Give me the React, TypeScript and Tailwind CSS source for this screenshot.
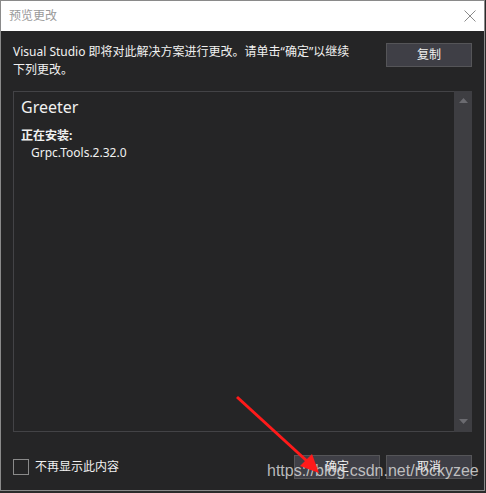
import React from "react";

export default function App() {
  const font = { fontFamily: '"Noto Sans", "Noto Sans CJK SC", sans-serif' };
  return (
    <div className="relative w-[486px] h-[493px] bg-[#2b2b2b] overflow-hidden" style={font}>
      <div className="w-[485px] h-[491px] flex flex-col border border-[#8a8a8a] bg-[#252526]">
        {/* title bar */}
        <div className="h-[30px] bg-white flex items-center justify-between pl-[8px] pr-[8px] shrink-0">
          <span className="text-[12px] text-[#9a9a9a] leading-none">预览更改</span>
          <svg width="12" height="12" viewBox="0 0 12 12">
            <path d="M0.5 0.5 L11.5 11.5 M11.5 0.5 L0.5 11.5" stroke="#8a8a8a" strokeWidth="1" />
          </svg>
        </div>
        {/* body */}
        <div className="flex-1 flex flex-col px-[12px] pt-[12px] pb-[11px]">
          <div className="flex items-start justify-between">
            <p className="text-[12px] leading-[18px] text-[#f1f1f1] w-[344px]">
              Visual Studio 即将对此解决方案进行更改。请单击“确定”以继续下列更改。
            </p>
            <button className="w-[86px] h-[24px] bg-[#3f3f46] border border-[#555558] text-[12px] text-[#f1f1f1] flex items-center justify-center">
              复制
            </button>
          </div>
          <div className="mt-[12px] h-[341px] flex">
            <div className="flex-1 border-l border-t border-b border-[#434346] pl-[7px] pt-[5px]">
              <div className="text-[16px] leading-[20px] text-[#f1f1f1]">Greeter</div>
              <div className="mt-[10px] text-[12px] leading-[17px] font-bold text-[#f1f1f1]">正在安装:</div>
              <div className="pl-[10px] text-[12px] leading-[17px] text-[#f1f1f1]">Grpc.Tools.2.32.0</div>
            </div>
            <div className="w-[18px] bg-[#3e3e42] flex flex-col items-center justify-between pt-[7px] pb-[8px]">
              <svg width="9" height="5" viewBox="0 0 9 5">
                <path d="M4.5 0 L9 5 L0 5 Z" fill="#6b6b70" />
              </svg>
              <svg width="9" height="5" viewBox="0 0 9 5">
                <path d="M0 0 L9 0 L4.5 5 Z" fill="#6b6b70" />
              </svg>
            </div>
          </div>
          <div className="mt-auto flex items-center justify-between h-[24px]">
            <div className="flex items-center gap-[6px]">
              <div className="w-[16px] h-[16px] border border-[#8a8a8a]" />
              <span className="text-[12px] text-[#f1f1f1]">不再显示此内容</span>
            </div>
            <div className="flex gap-[6px]">
              <button className="w-[86px] h-[24px] bg-[#3f3f46] border border-[#555558] text-[12px] text-[#f1f1f1] flex items-center justify-center">
                确定
              </button>
              <button className="w-[86px] h-[24px] bg-[#3f3f46] border border-[#555558] text-[12px] text-[#f1f1f1] flex items-center justify-center">
                取消
              </button>
            </div>
          </div>
        </div>
      </div>
      {/* watermark */}
      <div
        className="absolute left-[267px] top-[461px] text-[16px] leading-[20px] text-[rgba(215,215,215,0.85)]"
        style={{ fontFamily: '"Liberation Sans", sans-serif' }}
      >
        https://blog.csdn.net/rockyzee
      </div>
      {/* red arrow */}
      <svg className="absolute left-0 top-0" width="486" height="493" viewBox="0 0 486 493">
        <line x1="237" y1="397" x2="308" y2="462" stroke="#ff1a1a" strokeWidth="3" />
        <path d="M319 473 L300 466 L312 454 Z" fill="#ff1a1a" />
      </svg>
    </div>
  );
}
